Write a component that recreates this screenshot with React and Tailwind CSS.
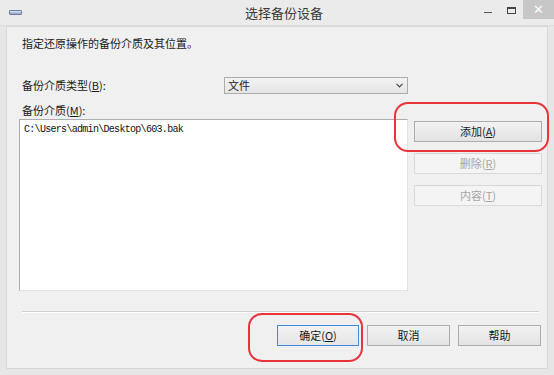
const cjk = { fontFamily: '"Noto Sans CJK SC", "Microsoft YaHei", sans-serif' }

function Btn({ children, disabled, primary, className = '' }) {
  const tone = disabled
    ? 'border-[#d9d9d9] bg-[#f4f4f4] text-[#a6a6a6]'
    : primary
      ? 'border-[#3c8ce6] bg-gradient-to-b from-[#f2f2f2] to-[#e6e6e6] text-[#1a1a1a]'
      : 'border-[#adadad] bg-gradient-to-b from-[#f2f2f2] to-[#e3e3e3] text-[#1a1a1a]'
  return (
    <div className={`flex items-center justify-center border text-[11px] leading-none ${tone} ${className}`}>
      {children}
    </div>
  )
}

export default function App() {
  return (
    <div className="relative w-[554px] h-[375px] bg-[#e6e6e6] flex flex-col overflow-hidden" style={cjk}>
      {/* title bar */}
      <div className="relative h-[26px] flex items-start justify-between bg-[#ebebeb] border-b border-[#dcdcdc]">
        <div className="mt-[10px] ml-[9px] w-[13px] h-[5px] rounded-[1px] border border-[#6b7f9e] bg-gradient-to-b from-[#dfe8f5] to-[#8ea4c4]" />
        <div className="absolute left-0 right-0 top-[6px] text-center text-[13px] leading-none text-[#3a3a3a] pl-[14px]">选择备份设备</div>
        <div className="relative flex items-start">
          <div className="mt-[12px] w-[8px] h-[1px] bg-[#555] mr-[15px]" />
          <div className="mt-[7px] w-[9px] h-[7px] border border-[#444] border-t-2 mr-[7px]" />
          <div className="w-[31px] h-[19px] bg-[#c7c7c7] flex items-center justify-center text-white text-[13px] leading-none" style={{ fontFamily: '"DejaVu Sans", sans-serif' }}>✕</div>
        </div>
      </div>

      {/* dialog body */}
      <div className="flex-1 mx-[6px] mb-[6px] border border-[#d8d8d8] bg-[#f0f0f0] flex flex-col pl-[12px] pr-[5px]">
        <div className="pl-[3px] mt-[8px] h-[16px] flex items-center text-[11px] text-[#1a1a1a]">指定还原操作的备份介质及其位置。</div>

        <div className="mt-[26px] flex items-center">
          <div className="w-[205px] pl-[3px] text-[11px] text-[#1a1a1a]">备份介质类型(<u>B</u>):</div>
          <div className="w-[184px] h-[17px] border border-[#acacac] bg-gradient-to-b from-[#f2f2f2] to-[#e5e5e5] flex items-center justify-between pl-[3px] pr-[4px]">
            <span className="text-[11px] leading-none text-[#1a1a1a]">文件</span>
            <svg width="7" height="5" viewBox="0 0 7 5" fill="none" stroke="#444" strokeWidth="1.2">
              <path d="M0.5 0.8 L3.5 3.8 L6.5 0.8" />
            </svg>
          </div>
        </div>

        <div className="mt-[9px] pl-[3px] h-[14px] flex items-center text-[11px] text-[#1a1a1a]">备份介质(<u>M</u>):</div>

        <div className="mt-[2px] flex items-start gap-[6px]">
          <div className="w-[389px] h-[172px] bg-white border border-[#e2e3ea] border-t-[#abadb3] border-l-[#abadb3] pl-[4px] pt-[2px]">
            <div className="text-[10px] tracking-[-0.7px] text-[#111]" style={{ fontFamily: '"Liberation Mono", monospace' }}>C:\Users\admin\Desktop\603.bak</div>
          </div>
          <div className="mt-[2px] flex flex-col gap-[11px]">
            <Btn className="w-[128px] h-[21px]">添加(<u>A</u>)</Btn>
            <Btn disabled className="w-[128px] h-[21px]">删除(<u>R</u>)</Btn>
            <Btn disabled className="w-[128px] h-[21px]">内容(<u>T</u>)</Btn>
          </div>
        </div>

        <div className="mt-[20px] ml-[3px] mr-[3px] h-[2px] border-t border-[#d0d0d0] border-b border-b-white" />

        <div className="mt-[12px] flex justify-end gap-[8px] pr-[1px]">
          <Btn primary className="w-[82px] h-[21px]">确定(<u>O</u>)</Btn>
          <Btn className="w-[83px] h-[21px]">取消</Btn>
          <Btn className="w-[83px] h-[21px]">帮助</Btn>
        </div>
      </div>

      {/* red annotation marks */}
      <div className="absolute left-[394px] top-[102px] w-[155px] h-[50px] border-2 border-[#e8343a] rounded-[14px]" />
      <div className="absolute left-[248px] top-[313px] w-[115px] h-[49px] border-2 border-[#e8343a] rounded-[14px]" />
    </div>
  )
}
